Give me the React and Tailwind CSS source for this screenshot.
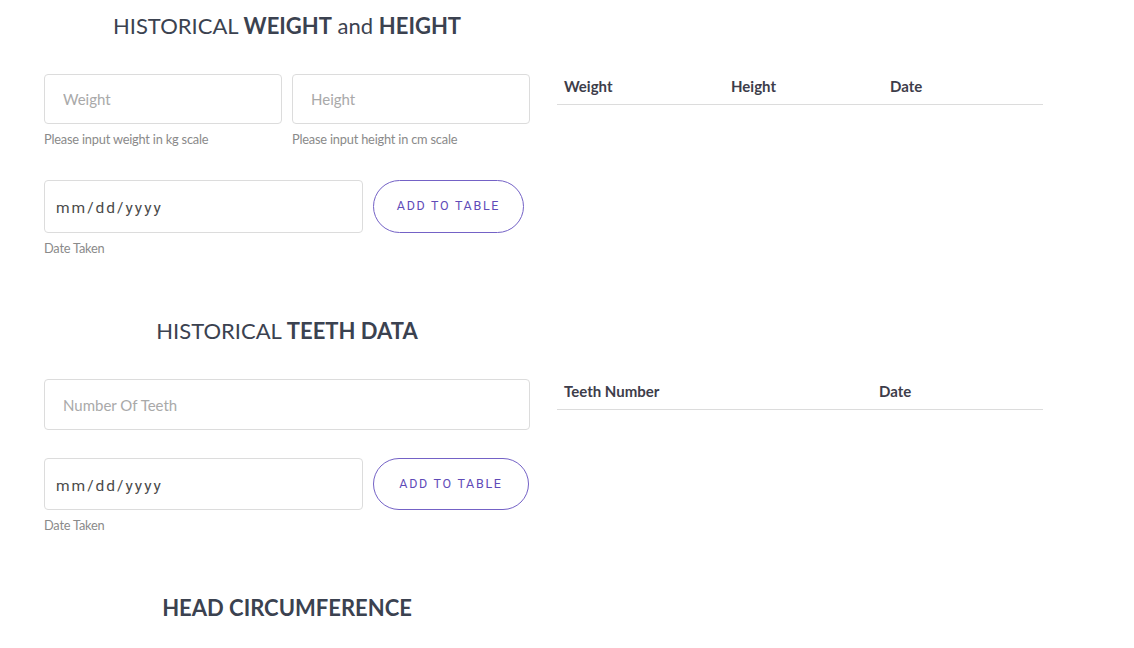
import React from 'react';

const font = { fontFamily: 'Lato, "Open Sans", sans-serif' };

const Title = ({ children }) => (
  <h2 className="text-center text-[22px] leading-[28px] text-[#3b4250] font-normal">
    {children}
  </h2>
);

const TextField = ({ placeholder }) => (
  <input
    type="text"
    placeholder={placeholder}
    className="h-full w-full rounded-[4px] border border-[#dcdcdc] bg-white pl-[18px] text-[15px] text-[#555] placeholder:text-[#a9a9a9] outline-none"
  />
);

const DateField = () => (
  <input
    type="text"
    placeholder="mm/dd/yyyy"
    className="h-full w-full rounded-[4px] border border-[#dcdcdc] bg-white pl-[11px] pt-[3px] font-[Roboto] text-[15.5px] tracking-[2px] text-[#444] placeholder:text-[#4a4a4a] outline-none"
  />
);

const AddButton = ({ width }) => (
  <button
    className={`h-full ${width} shrink-0 rounded-full border border-[#7462c6] bg-white font-[Roboto] text-[12.5px] font-normal tracking-[1.7px] text-[#5f4bb8]`}
  >
    ADD TO TABLE
  </button>
);

const Helper = ({ children }) => (
  <p className="mt-[7px] text-[12.8px] leading-[16px] text-[#8a8a8a] tracking-[-0.2px]">{children}</p>
);

const HeaderTable = ({ cols }) => (
  <div className="w-[486px] pt-[56px]">
    <div className="flex border-b border-[#dcdcdc]">
      {cols.map(([label, w]) => (
        <div key={label} className={`${w} py-[8px] pl-[7px] text-[15px] leading-[20px] font-bold text-[#3d3d4a]`}>
          {label}
        </div>
      ))}
    </div>
  </div>
);

export default function App() {
  return (
    <div className="min-h-screen bg-white pl-[44px]" style={font}>
      {/* Weight and height */}
      <section className="flex gap-[27px] pt-[12px]">
        <div className="w-[486px]">
          <Title>
            HISTORICAL <b className="font-bold">WEIGHT</b> and <b className="font-bold">HEIGHT</b>
          </Title>
          <div className="mt-[34px] flex gap-[10px]">
            <div className="w-[238px]">
              <div className="h-[50px]"><TextField placeholder="Weight" /></div>
              <Helper>Please input weight in kg scale</Helper>
            </div>
            <div className="w-[238px]">
              <div className="h-[50px]"><TextField placeholder="Height" /></div>
              <Helper>Please input height in cm scale</Helper>
            </div>
          </div>
          <div className="mt-[33px] flex h-[53px] gap-[10px]">
            <div className="w-[319px]"><DateField /></div>
            <AddButton width="w-[151px]" />
          </div>
          <Helper>Date Taken</Helper>
        </div>
        <HeaderTable cols={[['Weight', 'w-[167px]'], ['Height', 'w-[159px]'], ['Date', 'flex-1']]} />
      </section>

      {/* Teeth */}
      <section className="mt-[61px] flex gap-[27px]">
        <div className="w-[486px]">
          <Title>
            HISTORICAL <b className="font-bold">TEETH DATA</b>
          </Title>
          <div className="mt-[34px] h-[51px]">
            <TextField placeholder="Number Of Teeth" />
          </div>
          <div className="mt-[28px] flex h-[52px] gap-[10px]">
            <div className="w-[319px]"><DateField /></div>
            <AddButton width="w-[156px]" />
          </div>
          <Helper>Date Taken</Helper>
        </div>
        <HeaderTable cols={[['Teeth Number', 'w-[315px]'], ['Date', 'flex-1']]} />
      </section>

      {/* Head circumference */}
      <section className="mt-[61px] w-[486px] pb-[40px]">
        <Title>
          <b className="font-bold">HEAD CIRCUMFERENCE</b>
        </Title>
      </section>
    </div>
  );
}
